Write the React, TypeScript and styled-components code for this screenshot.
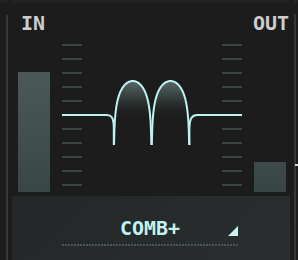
import React from "react";
import styled, { createGlobalStyle } from "styled-components";

const Global = createGlobalStyle`
  html, body { margin: 0; padding: 0; background: #1c1c1c; }
  #root { width: 298px; height: 260px; }
`;

const Root = styled.div`
  width: 298px;
  height: 260px;
  background: #1c1c1c;
  overflow: hidden;
  display: flex;
  flex-direction: column;
  font-family: "DejaVu Sans Mono", "Liberation Mono", monospace;
`;

const TopStrip = styled.div`
  height: 3px;
  display: flex;
  gap: 4px;
`;

const StripSeg = styled.div<{ $w: number }>`
  width: ${(p) => p.$w}px;
  background: #222323;
`;

const Frame = styled.div`
  flex: 1;
  display: flex;
  min-height: 0;
`;

const LeftRail = styled.div`
  width: 2px;
  margin-left: 6px;
  margin-top: 12px;
  background: #383838;
`;

const RightRail = styled.div`
  width: 2px;
  margin-top: 11px;
  border-left: 2px solid #363636;
  display: flex;
  flex-direction: column;
`;

const Thumb = styled.div`
  margin-top: 150px;
  margin-left: -1px;
  width: 3px;
  height: 2px;
  background: #d6d6d6;
`;

const Content = styled.div`
  width: 286px;
  display: flex;
  flex-direction: column;
`;

const Header = styled.div`
  padding: 10px 5px 0 13px;
  height: 20px;
  display: flex;
  justify-content: space-between;
  font-size: 20px;
  line-height: 20px;
  font-weight: bold;
  color: #cdcdcd;
`;

const MeterRow = styled.div`
  margin-top: 7px;
  height: 152px;
  padding-left: 10px;
  display: flex;
  align-items: flex-end;
  gap: 12px;
`;

const Meter = styled.div<{ $dim?: boolean }>`
  width: 32px;
  background: ${(p) =>
    p.$dim
      ? "linear-gradient(#3d4a4a, #384545)"
      : "linear-gradient(#4a5958, #394646)"};
`;

const Display = styled.div`
  position: relative;
  width: 180px;
  height: 152px;
  display: flex;
  justify-content: space-between;
`;

const TickColumn = styled.div`
  width: 20px;
  padding-top: 4px;
  display: flex;
  flex-direction: column;
  gap: 12px;
`;

const Tick = styled.div`
  height: 2px;
  background: #384342;
`;

const Curve = styled.svg`
  position: absolute;
  left: 0;
  top: 0;
`;

const Panel = styled.div`
  margin: 4px 0 0 4px;
  width: 278px;
  height: 64px;
  background: linear-gradient(135deg, #242727 0%, #282b2b 55%, #2b2e2e 100%);
  display: flex;
  flex-direction: column;
  padding: 22px 52px 0 50px;
  box-sizing: border-box;
`;

const SelectRow = styled.div`
  display: grid;
  grid-template-columns: 1fr auto 1fr;
  align-items: end;
  height: 20px;
`;

const SelectText = styled.div`
  grid-column: 2;
  font-size: 20px;
  line-height: 20px;
  font-weight: bold;
  color: #bff3f3;
`;

const Caret = styled.div`
  grid-column: 3;
  justify-self: end;
  width: 10px;
  height: 10px;
  margin-bottom: 2px;
  background: #c4f6f6;
  clip-path: polygon(100% 0, 100% 100%, 0 100%);
`;

const Dotted = styled.div`
  margin-top: 6px;
  height: 2px;
  background: repeating-linear-gradient(
    to right,
    #485656 0px,
    #485656 2px,
    transparent 2px,
    transparent 3px
  );
`;

// Graph coordinates relative to the display's top-left (page x 62, y 40)
const PEAK = 41;
const SCALE = 1.9;
const BOTTOM = 110;

function humpPath(x1: number, x2: number): string {
  const pts: string[] = [];
  const steps = 120;
  for (let i = 0; i <= steps; i++) {
    const x = x1 + ((x2 - x1) * i) / steps;
    const t = (x - x1) / (x2 - x1);
    const s = Math.max(Math.sin(Math.PI * t), 1e-4);
    const db = 20 * Math.log10(s);
    const y = Math.min(PEAK - SCALE * db, BOTTOM);
    pts.push(`${i === 0 ? "M" : "L"}${x.toFixed(2)},${y.toFixed(2)}`);
  }
  return pts.join(" ");
}

const N1 = 51.8;
const N2 = 89.6;
const N3 = 127.4;

const leftSide = `M0,75 L45,75 C49,75 51.5,77 51.8,87 L51.8,${BOTTOM}`;
const rightSide = `M180,75 L135,75 C131,75 127.7,77 127.4,87 L127.4,${BOTTOM}`;
const h1 = humpPath(N1, N2);
const h2 = humpPath(N2, N3);

const ticks = Array.from({ length: 11 }, (_, i) => i);

function Graph() {
  return (
    <Curve width={180} height={105} viewBox="0 0 180 105">
      <defs>
        <linearGradient id="hf" gradientUnits="userSpaceOnUse" x1="0" y1="41" x2="0" y2="80">
          <stop offset="0" stopColor="#5a6866" stopOpacity="1" />
          <stop offset="0.45" stopColor="#3a4443" stopOpacity="0.8" />
          <stop offset="1" stopColor="#1c1c1c" stopOpacity="0" />
        </linearGradient>
      </defs>
      <path d={`${h1} Z`} fill="url(#hf)" stroke="none" />
      <path d={`${h2} Z`} fill="url(#hf)" stroke="none" />
      <g fill="none" stroke="#bdf2f2" strokeWidth={2} strokeLinejoin="round">
        <path d={leftSide} />
        <path d={h1} />
        <path d={h2} />
        <path d={rightSide} />
      </g>
    </Curve>
  );
}

export default function App() {
  return (
    <>
      <Global />
      <Root>
        <TopStrip>
          <StripSeg $w={8} />
          <StripSeg $w={278} />
          <StripSeg $w={5} />
        </TopStrip>
        <Frame>
          <LeftRail />
          <Content>
            <Header>
              <span>IN</span>
              <span>OUT</span>
            </Header>
            <MeterRow>
              <Meter style={{ height: 120 }} />
              <Display>
                <TickColumn>
                  {ticks.map((i) => (
                    <Tick key={i} />
                  ))}
                </TickColumn>
                <TickColumn>
                  {ticks.map((i) => (
                    <Tick key={i} />
                  ))}
                </TickColumn>
                <Graph />
              </Display>
              <Meter $dim style={{ height: 30 }} />
            </MeterRow>
            <Panel>
              <SelectRow>
                <SelectText>COMB+</SelectText>
                <Caret />
              </SelectRow>
              <Dotted />
            </Panel>
          </Content>
          <RightRail>
            <Thumb />
          </RightRail>
        </Frame>
      </Root>
    </>
  );
}
